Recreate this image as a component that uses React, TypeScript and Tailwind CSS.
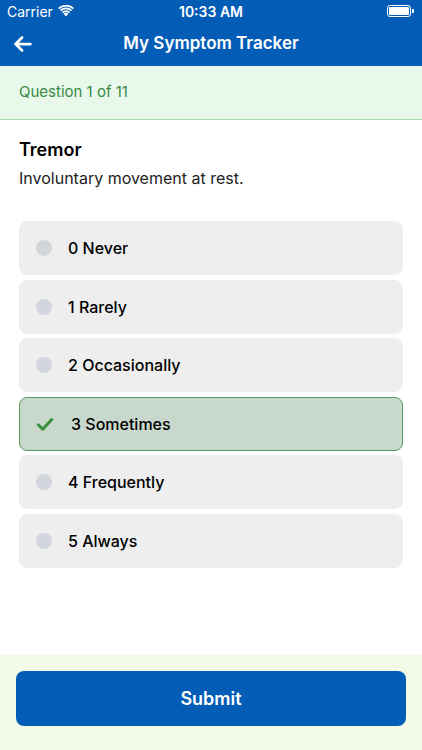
import { useState } from "react";

const OPTIONS = [
  "0 Never",
  "1 Rarely",
  "2 Occasionally",
  "3 Sometimes",
  "4 Frequently",
  "5 Always",
];

export default function App() {
  const [selected, setSelected] = useState(3);

  return (
    <div
      className="w-[422px] h-[750px] flex flex-col bg-white overflow-hidden"
      style={{ fontFamily: "Inter, 'Liberation Sans', sans-serif" }}
    >
      {/* Status bar + nav */}
      <div className="bg-[#035db7] text-white">
        <div className="h-[22px] flex items-center justify-between px-[7px] text-[14px]">
          <div className="flex items-center gap-[5px] w-[120px]">
            <span>Carrier</span>
            <svg width="16" height="12" viewBox="0 0 16 12" fill="white">
              <path d="M8 11.5 L5.6 8.8 a3.4 3.4 0 0 1 4.8 0 Z" />
              <path d="M3.9 7 a5.8 5.8 0 0 1 8.2 0 l-1.1 1.2 a4.2 4.2 0 0 0 -6 0 Z" />
              <path d="M2 5 a8.5 8.5 0 0 1 12 0 l-1.1 1.2 a7 7 0 0 0 -9.8 0 Z" />
              <path d="M0.1 3 a11.3 11.3 0 0 1 15.8 0 l-1.1 1.2 a9.7 9.7 0 0 0 -13.6 0 Z" />
            </svg>
          </div>
          <span className="font-semibold">10:33 AM</span>
          <div className="w-[120px] flex justify-end pr-[1px]">
            <div className="flex items-center">
              <div className="w-[24px] h-[12px] rounded-[3px] border border-white p-[1px]">
                <div className="w-full h-full bg-white rounded-[1px]" />
              </div>
              <div className="w-[2px] h-[4px] bg-white rounded-r-[1px] ml-[1px]" />
            </div>
          </div>
        </div>
        <div className="h-[44px] relative flex items-center justify-center">
          <svg
            className="absolute left-[12px] top-[11px]"
            width="22"
            height="22"
            viewBox="0 0 24 24"
            fill="none"
            stroke="white"
            strokeWidth="3"
            strokeLinecap="round"
            strokeLinejoin="round"
          >
            <path d="M20 12H4" />
            <path d="M11 5l-7 7 7 7" />
          </svg>
          <h1 className="text-[17px] font-semibold">My Symptom Tracker</h1>
        </div>
      </div>

      {/* Progress band */}
      <div className="h-[54px] bg-[#e8f8ea] border-b border-[#a8dcae] flex items-center px-[19px]">
        <span className="text-[15px] text-[#3a8a45]">Question 1 of 11</span>
      </div>

      {/* Question */}
      <div className="flex-1 px-[19px] pt-[18px]">
        <h2 className="text-[18px] font-semibold text-black leading-[24px]">Tremor</h2>
        <p className="text-[16px] text-[#222] mt-[5px] leading-[22px]">
          Involuntary movement at rest.
        </p>

        <div className="mt-[32px] flex flex-col gap-[4.5px]">
          {OPTIONS.map((label, i) => {
            const active = i === selected;
            return (
              <button
                key={label}
                onClick={() => setSelected(i)}
                className={
                  active
                    ? "h-[54px] rounded-[8px] bg-[#c8d8cc] border border-[#5a9a5a] flex items-center px-[16px] text-left"
                    : "h-[54px] rounded-[8px] bg-[#eeeeee] border border-[#eeeeee] flex items-center px-[16px] text-left"
                }
              >
                {active ? (
                  <svg width="18" height="18" viewBox="0 0 24 24" className="mr-[17px]">
                    <path
                      d="M3 13l6 6L21 6"
                      fill="none"
                      stroke="#3a8f3a"
                      strokeWidth="4"
                      strokeLinecap="round"
                      strokeLinejoin="round"
                    />
                  </svg>
                ) : (
                  <span className="w-[16px] h-[16px] rounded-full bg-[#d1d5dc] mr-[16px]" />
                )}
                <span className="text-[16px] font-medium text-black">{label}</span>
              </button>
            );
          })}
        </div>
      </div>

      {/* Footer */}
      <div className="h-[95px] bg-[#f3fbe6] px-[16px] pt-[16px]">
        <button className="w-full h-[55px] rounded-[8px] bg-[#035db7] text-white text-[18px] font-semibold">
          Submit
        </button>
      </div>
    </div>
  );
}
